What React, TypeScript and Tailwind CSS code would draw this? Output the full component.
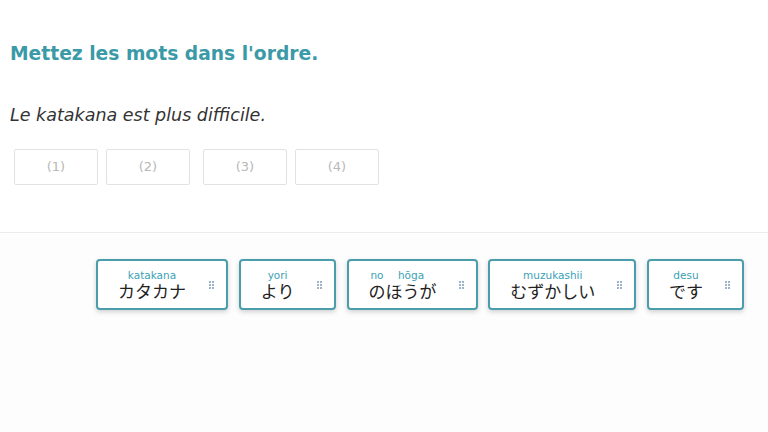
const slots = ["(1)", "(2)", "(3)", "(4)"];

type Seg = { ruby: string; text: string };
type Tile = { width: string; segs: Seg[] };
const tiles: Tile[] = [
  { width: "w-[132px]", segs: [{ ruby: "katakana", text: "カタカナ" }] },
  { width: "w-[97px]", segs: [{ ruby: "yori", text: "より" }] },
  {
    width: "w-[131px]",
    segs: [
      { ruby: "no", text: "の" },
      { ruby: "hōga", text: "ほうが" },
    ],
  },
  { width: "w-[148px]", segs: [{ ruby: "muzukashii", text: "むずかしい" }] },
  { width: "w-[97px]", segs: [{ ruby: "desu", text: "です" }] },
];

function Grip() {
  return (
    <div className="grid grid-cols-2 gap-[1px]">
      {[0, 1, 2, 3, 4, 5].map((i) => (
        <span key={i} className="block w-[2px] h-[2px] bg-[#9fb3cc]" />
      ))}
    </div>
  );
}

export default function App() {
  return (
    <div className="w-[768px] h-[432px] bg-white overflow-hidden font-['DejaVu_Sans','Noto_Sans_CJK_JP',sans-serif]">
      {/* Question */}
      <div className="px-[10px] pt-[42px]">
        <h1 className="text-[18.7px] leading-[24px] font-bold text-[#3b9aa7]">
          Mettez les mots dans l'ordre.
        </h1>
        <p className="mt-[37px] text-[17.5px] leading-[24px] italic text-[#333]">
          Le katakana est plus difficile.
        </p>

        {/* Answer slots */}
        <div className="mt-[22px] ml-[4px] flex">
          {slots.map((s, i) => (
            <div
              key={s}
              className={`w-[84px] h-[36px] border border-[#e2e2e2] rounded-[2px] flex items-center justify-center text-[13px] text-[#b8b8b8] ${
                i === 0 ? "" : i === 2 ? "ml-[13px]" : "ml-[8px]"
              }`}
            >
              {s}
            </div>
          ))}
        </div>
      </div>

      <div className="mt-[47px] h-[1px] bg-[#ebebeb]" />

      {/* Word tiles */}
      <div className="bg-[#fdfdfd] h-full pt-[26px] pl-[96px] flex items-start gap-[10.75px]">
        {tiles.map((t, i) => (
          <div
            key={i}
            className={`${t.width} h-[51px] shrink-0 bg-white border-2 border-[#4a9eab] rounded-[4px] shadow-[0_2px_5px_rgba(0,0,0,0.18)] flex items-center justify-between pl-[20px] pr-[12px]`}
          >
            <div className="flex items-end">
              {t.segs.map((seg) => (
                <div key={seg.ruby} className="flex flex-col items-center">
                  <span className="text-[10.5px] leading-[12px] text-[#3aa2b3]">{seg.ruby}</span>
                  <span className="text-[17px] leading-[19px] text-[#222] font-['Noto_Sans_CJK_JP',sans-serif]">
                    {seg.text}
                  </span>
                </div>
              ))}
            </div>
            <Grip />
          </div>
        ))}
      </div>
    </div>
  );
}
